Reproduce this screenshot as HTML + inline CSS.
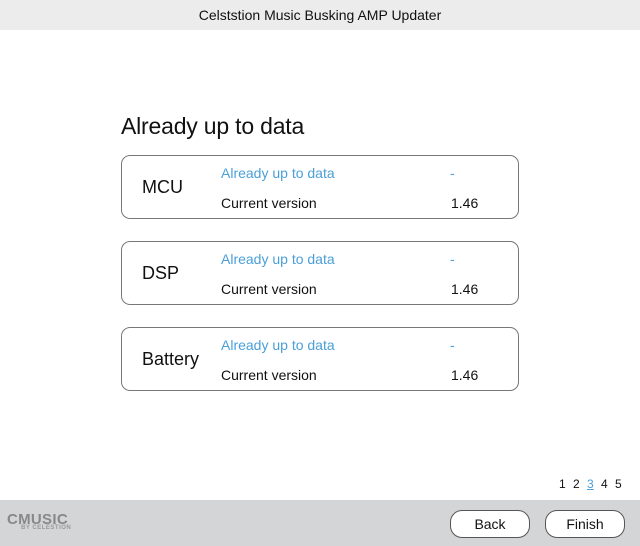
<!DOCTYPE html>
<html><head><style>
body{margin:0;width:640px;height:546px;position:relative;background:#fff;font-family:"Liberation Sans",sans-serif;overflow:hidden;color:#111}
.tb{position:absolute;left:0;top:0;width:640px;height:30px;background:#ececec;text-align:center;line-height:30px;font-size:14px}
h1{position:absolute;left:121px;top:113px;margin:0;font-weight:normal;font-size:23px;letter-spacing:-0.2px}
.card{position:absolute;left:121px;width:396px;height:62px;border:1px solid #777;border-radius:9px}
.n{position:absolute;left:20px;top:21px;font-size:18px}
.s{position:absolute;left:99px;top:9px;font-size:14px;color:#4a9fd8}
.d{position:absolute;left:328px;top:9px;font-size:14px;color:#4a9fd8}
.c{position:absolute;left:99px;top:39px;font-size:14px}
.v{position:absolute;left:329px;top:39px;font-size:14px}
.pg{position:absolute;left:559px;top:477px;font-size:12px;word-spacing:4px}
.pg u{color:#4a9fd8}
.ft{position:absolute;left:0;top:500px;width:640px;height:46px;background:#d3d5d6}
.btn{position:absolute;top:10px;height:26px;border:1px solid #555;border-radius:12px;background:#fff;text-align:center;line-height:26px;font-size:14px}
.logo{position:absolute;left:7px;top:11px;color:#888;font-weight:bold;font-size:15px;letter-spacing:0.3px}
.logo span{display:block;font-size:6px;color:#999;margin-left:14px;margin-top:-3px;letter-spacing:0.5px}
</style></head><body>
<div class="tb">Celststion Music Busking AMP Updater</div>
<h1>Already up to data</h1>
<div class="card" style="top:155px"><div class="n">MCU</div><div class="s">Already up to data</div><div class="d">-</div><div class="c">Current version</div><div class="v">1.46</div></div>
<div class="card" style="top:241px"><div class="n">DSP</div><div class="s">Already up to data</div><div class="d">-</div><div class="c">Current version</div><div class="v">1.46</div></div>
<div class="card" style="top:327px"><div class="n">Battery</div><div class="s">Already up to data</div><div class="d">-</div><div class="c">Current version</div><div class="v">1.46</div></div>
<div class="pg">1 2 <u>3</u> 4 5</div>
<div class="ft">
<div class="logo">CMUSIC<span>BY CELESTION</span></div>
<div class="btn" style="left:450px;width:78px">Back</div>
<div class="btn" style="left:545px;width:78px">Finish</div>
</div>
</body></html>
